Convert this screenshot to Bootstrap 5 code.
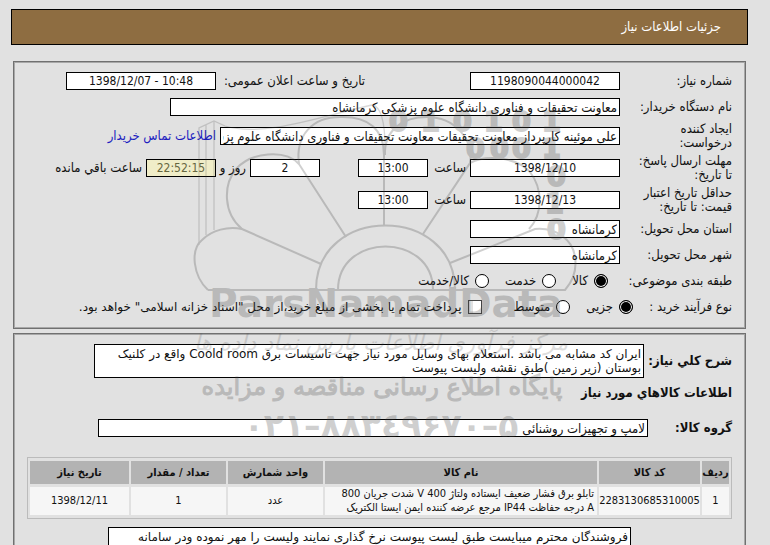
<!DOCTYPE html>
<html lang="fa" dir="rtl">
<head>
<meta charset="utf-8">
<meta name="viewport" content="width=device-width, initial-scale=1">
<title>جزئیات اطلاعات نیاز</title>
<link href="https://cdn.jsdelivr.net/npm/bootstrap@5.3.0/dist/css/bootstrap.min.css" rel="stylesheet">
<style>
body{background:#e1e1e1;color:#111;font:13px/14px "DejaVu Sans Condensed","DejaVu Sans",sans-serif}
.page-wrap{padding:9px 22px 0 11px;height:100vh;overflow:hidden}
.title-bar{background:#8e6d41;border:1px solid #000;color:#fff;height:36px;padding:0 26px}
.title-bar h1{font-size:13px;font-weight:normal}
.group-box{border:1px solid #707070;box-shadow:inset 0 0 0 1px #a8a8a8;margin:0 2px;min-width:0;padding:6px 13px 8px}
.lbl{width:112px;padding-left:14px;flex:none}
.lbl-b{width:100px;flex:none}
.row-s{min-height:26px}
.row-l{min-height:32px}
.fld{height:18px;border:1px solid #000;background:#fff;color:#111;padding:0 2px;line-height:16px;border-radius:0;min-width:0}
.num{text-align:center;font-size:12px}
.w-sm{width:70px}.w-md{width:150px}.w-lg{width:400px}.w-xl{width:450px}.w-xxl{width:550px}
.timer{background:#f0edc8;color:#666640}
.hour{width:34px}.hour-and{width:26px}
.opt{appearance:none;width:14px;height:14px;border:1px solid #000;background:#fff;margin:0;flex:none}
.opt-row label{display:flex;align-items:center;gap:6px;white-space:nowrap}
.round-opt{border-radius:50%}
.round-opt:checked{background:#000;box-shadow:inset 0 0 0 1px #fff}
.pay-opt{background:linear-gradient(to left,#fff 8px,#e1e1e1 8px);border-color:#444}
.topic-lbl{width:108px}.proc-lbl{width:83px}
.pay-lbl{margin-right:16px;font:12px/14px "DejaVu Sans",sans-serif}
.second-date{margin-right:105px;width:145px}
.days-fld{margin-right:34px}
.contact{color:#1c1cc0;text-decoration:none}
.area{height:34px;padding:2px;resize:none;font:12px/14px "DejaVu Sans",sans-serif;overflow:hidden;border:1px solid #000;background:#fff;color:#111;border-radius:0}
.bold-lbl{font-weight:bold;flex:none}
h2.bold-lbl{font-size:13px;line-height:14px;margin:8px 0 19px}
.w-desc{width:84px}.w-group{width:80px}
.pad-t{padding-top:10px}
.goods{border:1px solid #bbb;border-collapse:separate;border-spacing:2px 3px;font-size:11px;line-height:14px;width:100%;text-align:center;table-layout:fixed;margin:20px 0 8px}
.goods th{background:#b3b3b3;height:23px;padding:0}
.goods td{background:#f6f6f6;height:28px;padding:0 2px}
.c-idx{width:27px}.c-code{width:101px}.c-n{width:95px}.c-date{width:99px}
.goods .name-cell{text-align:right;padding:0 3px 0 12px}
.note{width:523px;height:52px;margin-right:101px}
.mark-layer{left:190px;top:90px;pointer-events:none;z-index:5;opacity:.25;direction:ltr}
.mark-layer text{fill:#444;font-family:"DejaVu Sans",sans-serif;font-weight:bold;text-anchor:middle}
.mark-layer .digits text{text-anchor:start;font-size:27px;stroke:#444;stroke-width:2px}
.mark-layer .phone{unicode-bidi:bidi-override;direction:ltr}
.mark-layer .site-line{font-weight:normal;stroke:#444;stroke-width:1px}
.mark-layer .hand-line{font-weight:normal;font-style:italic;opacity:.7}
</style>
<script src="https://cdn.jsdelivr.net/npm/bootstrap@5.3.0/dist/js/bootstrap.bundle.min.js"></script>
</head>
<body>
<main class="page-wrap position-relative">
<header class="title-bar d-flex align-items-center"><h1 class="m-0">جزئیات اطلاعات نیاز</h1></header>

<fieldset class="group-box mt-3">
  <div class="d-flex align-items-center row-s">
    <label class="lbl" for="f-no">شماره نیاز:</label>
    <input class="fld num w-md" id="f-no" value="1198090044000042">
    <label class="second-date" for="f-pub">تاریخ و ساعت اعلان عمومی:</label>
    <span class="ps-1"></span>
    <input class="fld num w-md" id="f-pub" dir="ltr" value="1398/12/07 - 10:48">
  </div>
  <div class="d-flex align-items-center row-s">
    <label class="lbl text-nowrap" for="f-org">نام دستگاه خریدار:</label>
    <input class="fld w-xl" id="f-org" value="معاونت تحقیقات و فناوری دانشگاه علوم پزشکی کرمانشاه">
  </div>
  <div class="d-flex align-items-center row-l">
    <label class="lbl" for="f-by">ایجاد کننده درخواست:</label>
    <input class="fld w-lg" id="f-by" value="علی موئینه کارپرداز معاونت تحقیقات معاونت تحقیقات و فناوری دانشگاه علوم پزشکی کرمانشاه">
    <span class="ps-1"></span>
    <a class="contact" href="#">اطلاعات تماس خریدار</a>
  </div>
  <div class="d-flex align-items-center row-l gap-1">
    <label class="lbl-b ms-2" for="f-due">مهلت ارسال پاسخ: تا تاریخ:</label>
    <input class="fld num w-md" id="f-due" value="1398/12/10">
    <label class="hour" for="f-dueh">ساعت</label>
    <input class="fld num w-sm" id="f-dueh" value="13:00">
    <input class="fld num w-sm days-fld" id="f-days" value="2">
    <label class="hour-and text-nowrap" for="f-days">روز و</label>
    <input class="fld num w-sm timer" id="f-left" value="22:52:15">
    <label for="f-left">ساعت باقي مانده</label>
  </div>
  <div class="d-flex align-items-center row-l gap-1">
    <label class="lbl-b ms-2" for="f-val">حداقل تاریخ اعتبار قیمت: تا تاریخ:</label>
    <input class="fld num w-md" id="f-val" value="1398/12/13">
    <label class="hour" for="f-valh">ساعت</label>
    <input class="fld num w-sm" id="f-valh" value="13:00">
  </div>
  <div class="d-flex align-items-center row-s">
    <label class="lbl text-nowrap" for="f-prov">استان محل تحویل:</label>
    <input class="fld w-md" id="f-prov" value="کرمانشاه">
  </div>
  <div class="d-flex align-items-center row-s">
    <label class="lbl" for="f-city">شهر محل تحویل:</label>
    <input class="fld w-md" id="f-city" value="کرمانشاه">
  </div>
  <div class="d-flex align-items-center row-s gap-3 opt-row" role="radiogroup" aria-label="طبقه بندی موضوعی">
    <span class="text-nowrap topic-lbl">طبقه بندی موضوعی:</span>
    <label><input class="opt round-opt" type="radio" name="topic" checked>کالا</label>
    <label><input class="opt round-opt" type="radio" name="topic">خدمت</label>
    <label><input class="opt round-opt" type="radio" name="topic">کالا/خدمت</label>
  </div>
  <div class="d-flex align-items-center row-s gap-3 opt-row" role="radiogroup" aria-label="نوع فرآیند خرید">
    <span class="text-nowrap proc-lbl">نوع فرآیند خرید :</span>
    <label><input class="opt round-opt" type="radio" name="proc" checked>جزیی</label>
    <label><input class="opt round-opt" type="radio" name="proc">متوسط</label>
    <label class="pay-lbl"><input class="opt pay-opt" type="checkbox">پرداخت تمام یا بخشی از مبلغ خرید،از محل "اسناد خزانه اسلامی" خواهد بود.</label>
  </div>
</fieldset>

<fieldset class="group-box mt-1 pad-t">
  <div class="d-flex align-items-center gap-1">
    <label class="bold-lbl w-desc" for="f-desc">شرح کلي نیاز:</label>
    <textarea class="area w-xxl" id="f-desc">ایران کد مشابه می باشد .استعلام بهای وسایل مورد نیاز جهت تاسیسات برق Coold room واقع در کلنیک بوستان (زیر زمین )طبق نقشه ولیست پیوست</textarea>
  </div>
  <h2 class="bold-lbl">اطلاعات کالاهاي مورد نیاز</h2>
  <div class="d-flex align-items-center gap-1">
    <label class="bold-lbl w-group" for="f-group">گروه کالا:</label>
    <input class="fld w-xxl" id="f-group" value="لامپ و تجهیزات روشنائی">
  </div>
  <table class="goods">
    <colgroup><col class="c-idx"><col class="c-code"><col><col class="c-n"><col class="c-n"><col class="c-date"></colgroup>
    <thead><tr><th>ردیف</th><th>کد کالا</th><th>نام کالا</th><th>واحد شمارش</th><th>تعداد / مقدار</th><th>تاریخ نیاز</th></tr></thead>
    <tbody><tr><td>1</td><td class="px-0">2283130685310005</td><td class="name-cell">تابلو برق فشار ضعیف ایستاده ولتاژ 400 V شدت جریان 800 A درجه حفاظت IP44 مرجع عرضه کننده ایمن ایستا الکتریک</td><td>عدد</td><td>1</td><td>1398/12/11</td></tr></tbody>
  </table>
  <textarea class="area note" aria-label="توضیحات">فروشندگان محترم میبایست طبق لیست پیوست نرخ گذاری نمایند ولیست را مهر نموده ودر سامانه</textarea>
</fieldset>

<svg class="mark-layer position-absolute" width="390" height="365" viewBox="190 90 390 365" aria-hidden="true">
  <g fill="none" stroke="#444" stroke-width="2">
    <path d="M208 290H565C573 281 577 270 575 257C573 240 556 227 535 229L450 263"/>
    <path d="M208 290C193 276 190 250 202 240C212 230 228 226 242 229L321 264"/>
    <path d="M242 229C223 213 223 185 236 169C251 152 285 149 299 164L346 237"/>
    <path d="M299 164C295 135 313 117 340 117C369 116 384 130 384 155V225"/>
    <path d="M385 155C384 130 403 117 427 117C455 117 474 140 470 163L423 234"/>
    <path d="M470 163C485 155 515 156 530 172C543 189 543 214 529 229"/>
    <path d="M316 290C316 204 455 204 455 290M338 290C338 232 433 232 433 290"/>
  </g>
  <g fill="none" stroke="#444" stroke-width="1.3" opacity=".8">
    <path d="M199 245V128L214 121L225 126C265 138 325 115 372 105Q386 107 385 155M206 235V125M214 230V121"/>
  </g>
  <g class="digits">
    <text x="389 421 453 484 512 542" y="131">010101</text>
    <text x="466 490 512 542" y="158">0001</text>
    <text x="547" y="186">0</text><text x="545" y="213">1</text><text x="547" y="239">0</text>
  </g>
  <text x="386" y="317" font-size="39">ParsNamadData</text>
  <text class="hand-line" x="381" y="350" font-size="22">مرکز فرآوری اطلاعات پارس نماد داده ها</text>
  <text class="site-line" x="382" y="395" font-size="24">پایگاه اطلاع رسانی مناقصه و مزایده</text>
  <text class="phone" x="381" y="437" font-size="33">۰۲۱–۸۸۳٤۹۶۷۰–۵</text>
</svg>
</main>
</body>
</html>
